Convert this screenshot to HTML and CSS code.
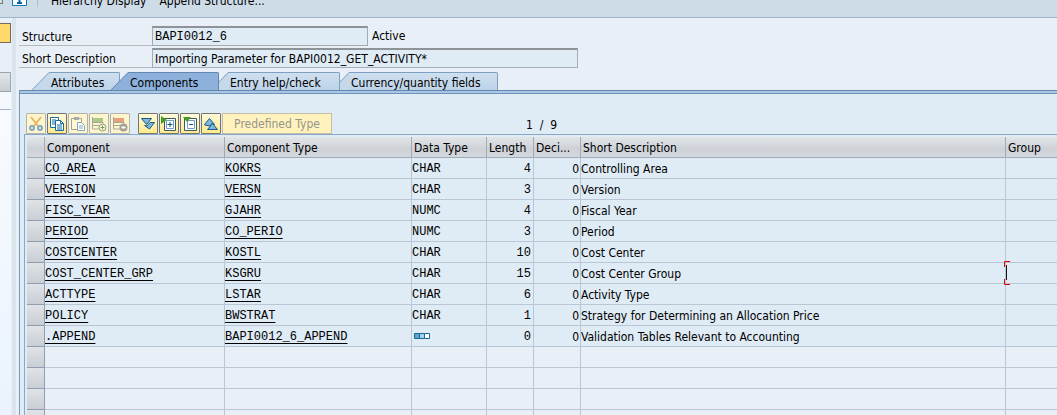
FILE: index.html
```html
<!DOCTYPE html>
<html lang="en">
<head>
<meta charset="utf-8">
<title>Structure BAPI0012_6</title>
<link rel="stylesheet" href="styles.css">
</head>
<body>
<header class="menubar">
  <span class="menu-stub"></span>
  <svg class="info" viewBox="0 0 15 6" width="15" height="6"><path d="M.5 0v5.500h14V0" fill="#fff" stroke="#0878b8"/><path d="M7.500 0v3M5 3h5" stroke="#07679e" stroke-width="2"/></svg>
  <span class="divider"></span>
  <button class="menu-item">Hierarchy Display</button>
  <button class="menu-item">Append Structure...</button>
</header>
<div class="workspace">
  <aside class="side">
    <div class="side-top"><button class="side-button" aria-label="Object list"></button></div>
    <div class="side-head"></div>
    <div class="side-line"></div>
    <div class="side-body"></div>
  </aside>
  <main class="main">
    <form class="form">
      <div class="field-row">
        <label class="label" for="structure">Structure</label>
        <input class="field mono" id="structure" value="BAPI0012_6" readonly>
        <span>Active</span>
      </div>
      <div class="field-row">
        <label class="label" for="description">Short Description</label>
        <input class="field wide" id="description" value="Importing Parameter for BAPI0012_GET_ACTIVITY*" readonly>
      </div>
    </form>
    <nav class="tabs">
      <button class="tab"><svg class="slant" viewBox="0 0 18 18"><path d="M0 18 17 .5h1V18z" fill="#c5d9eb"/><path d="M0 18 17 .5h1" fill="none" stroke="#7d9fc2"/></svg><span class="tab-text attributes">Attributes</span></button>
      <button class="tab active"><svg class="slant" viewBox="0 0 18 18"><path d="M0 18 17 .5h1V18z" fill="#8db1da"/><path d="M0 18 17 .5h1" fill="none" stroke="#6288b0"/></svg><span class="tab-text components">Components</span></button>
      <button class="tab"><svg class="slant short" viewBox="0 0 10 18"><path d="M0 18V10L9 .5h1V18z" fill="#c5d9eb"/><path d="M0 10 9 .5h1" fill="none" stroke="#7d9fc2"/></svg><span class="tab-text entry">Entry help/check</span></button>
      <button class="tab"><svg class="slant short" viewBox="0 0 10 18"><path d="M0 18V10L9 .5h1V18z" fill="#c5d9eb"/><path d="M0 10 9 .5h1" fill="none" stroke="#7d9fc2"/></svg><span class="tab-text currency">Currency/quantity fields</span></button>
    </nav>
    <section class="panel">
      <div class="toolbar">
        <button class="tool off" aria-label="Cut"><svg viewBox="0 0 16 16"><path d="M3 1l7 9M13 1L6 10" stroke="#e5b765" stroke-width="2"/><g fill="none" stroke="#7fa9c4" stroke-width="2"><circle cx="4" cy="12" r="2"/><circle cx="12" cy="12" r="2"/></g></svg></button>
        <button class="tool" aria-label="Copy"><svg viewBox="0 0 16 16"><path d="M1.500 1.500h8v10h-8z" fill="#fff" stroke="#176b9c"/><path d="M3 4h4M3 6h4M3 8h4" stroke="#176b9c"/><path d="M6.500 4.500h5l3 3v7h-8z" fill="#fff" stroke="#176b9c"/><path d="M11.500 4.500v3h3M8 9h5M8 11h5M8 13h5" fill="none" stroke="#176b9c"/></svg></button>
        <button class="tool off" aria-label="Paste"><svg viewBox="0 0 16 16"><path d="M1.500 2.500h10v11h-10z" fill="#fff8d9" stroke="#a4a294"/><path d="M4 1h5v3H4z" fill="#aaa"/><path d="M7.500 6.500h4l3 3v5h-7z" fill="#fff" stroke="#80a9bd"/><path d="M9 10h4M9 12h4" stroke="#80a9bd"/></svg></button>
        <button class="tool off" aria-label="Insert row"><svg viewBox="0 0 16 16"><path d="M1 2h11v4H1z" fill="#a9c889"/><path d="M1.500 1v12H8M1 6.500h11V9M1 9.500h7" fill="none" stroke="#aaa799"/><circle cx="11.500" cy="11.500" r="3.500" fill="#fff8d9" stroke="#82a371"/><path d="M9.500 11.500h4M11.500 9.500v4" stroke="#709861"/></svg></button>
        <button class="tool off" aria-label="Delete row"><svg viewBox="0 0 16 16"><path d="M1 2h11v4H1z" fill="#e3a17d"/><path d="M1.500 1v12H8M1 6.500h11V9M1 9.500h7" fill="none" stroke="#aaa799"/><circle cx="11.500" cy="11.500" r="4" fill="#a3a097"/><path d="M9.500 11.500h4" stroke="#fff" stroke-width="2"/></svg></button>
        <span class="tool-gap"></span>
        <button class="tool" aria-label="Last"><svg viewBox="0 0 16 16"><path d="M1.500 2.500h10l-5 6zM4.500 9.500l2.500.5 3-3.500h4.500l-5 6.500z" fill="#80b7df" stroke="#175c89"/></svg></button>
        <button class="tool" aria-label="Expand"><svg viewBox="0 0 16 16"><path d="M3.500 2.500h11v12h-11z" fill="#fff" stroke="#3c5668"/><path d="M5.500 4.500h7v8h-7z" fill="#fff" stroke="#6f9fbe"/><path d="M6.500 8.500h5M9 6v5" stroke="#07558a"/><path d="M0 0l6 4-6 4z" fill="#459b24"/></svg></button>
        <button class="tool" aria-label="Collapse"><svg viewBox="0 0 16 16"><path d="M2.500 2.500h12v12h-12z" fill="#fff" stroke="#3c5668"/><path d="M5.500 4.500h7v8h-7z" fill="#fff" stroke="#6f9fbe"/><path d="M7 8.500h4" stroke="#07558a"/><path d="M1 1h8L5 6z" fill="#459b24"/></svg></button>
        <button class="tool" aria-label="First"><svg viewBox="0 0 16 16"><path d="M4.500 13.500h10l-5-6zM1.500 8.500l5-6 5 6-2-1.500-2.500 3-5.500-1z" fill="#80b7df" stroke="#175c89"/></svg></button>
        <button class="predefined" disabled>Predefined Type</button>
        <span class="counter">1&nbsp; /&nbsp; 9</span>
      </div>
      <div class="grid-wrap">
      <table class="grid">
        <colgroup><col class="c-sel"><col class="c-name"><col class="c-type"><col class="c-data"><col class="c-num"><col class="c-num"><col class="c-desc"><col></colgroup>
        <thead><tr><th></th><th>Component</th><th>Component Type</th><th>Data Type</th><th>Length</th><th>Deci...</th><th>Short Description</th><th>Group</th></tr></thead>
        <tbody>
          <tr><td></td><td><a href="#">CO_AREA</a></td><td><a href="#">KOKRS</a></td><td>CHAR</td><td>4</td><td>0</td><td>Controlling Area</td><td></td></tr>
          <tr><td></td><td><a href="#">VERSION</a></td><td><a href="#">VERSN</a></td><td>CHAR</td><td>3</td><td>0</td><td>Version</td><td></td></tr>
          <tr><td></td><td><a href="#">FISC_YEAR</a></td><td><a href="#">GJAHR</a></td><td>NUMC</td><td>4</td><td>0</td><td>Fiscal Year</td><td></td></tr>
          <tr><td></td><td><a href="#">PERIOD</a></td><td><a href="#">CO_PERIO</a></td><td>NUMC</td><td>3</td><td>0</td><td>Period</td><td></td></tr>
          <tr><td></td><td><a href="#">COSTCENTER</a></td><td><a href="#">KOSTL</a></td><td>CHAR</td><td>10</td><td>0</td><td>Cost Center</td><td></td></tr>
          <tr><td></td><td><a href="#">COST_CENTER_GRP</a></td><td><a href="#">KSGRU</a></td><td>CHAR</td><td>15</td><td>0</td><td>Cost Center Group</td><td class="focus"><svg class="cursor" viewBox="0 0 6 24"><path d="M6 .5H.5V6M.5 18v5.500H6" fill="none" stroke="#e00000"/><path d="M2.500 4v15" stroke="#111"/></svg></td></tr>
          <tr><td></td><td><a href="#">ACTTYPE</a></td><td><a href="#">LSTAR</a></td><td>CHAR</td><td>6</td><td>0</td><td>Activity Type</td><td></td></tr>
          <tr><td></td><td><a href="#">POLICY</a></td><td><a href="#">BWSTRAT</a></td><td>CHAR</td><td>1</td><td>0</td><td>Strategy for Determining an Allocation Price</td><td></td></tr>
          <tr><td></td><td><a href="#">.APPEND</a></td><td><a href="#">BAPI0012_6_APPEND</a></td><td><svg class="append" viewBox="0 0 16 6"><g stroke="#166a98"><path d="M.5.500h5v5h-5z" fill="#5ba6cf"/><path d="M5.500.500h5v5h-5z" fill="#a9d0e8"/><path d="M10.500.500h5v5h-5z" fill="#fff"/></g></svg></td><td>0</td><td>0</td><td>Validation Tables Relevant to Accounting</td><td></td></tr>
          <tr class="empty"><td></td><td></td><td></td><td></td><td></td><td></td><td></td><td></td></tr>
          <tr class="empty"><td></td><td></td><td></td><td></td><td></td><td></td><td></td><td></td></tr>
          <tr class="empty"><td></td><td></td><td></td><td></td><td></td><td></td><td></td><td></td></tr>
          <tr class="empty"><td></td><td></td><td></td><td></td><td></td><td></td><td></td><td></td></tr>
        </tbody>
      </table>
      </div>
    </section>
  </main>
</div>
</body>
</html>
```

FILE: styles.css
```css
* { box-sizing: border-box; }
body {
  margin: 0;
  height: 100vh;
  overflow: hidden;
  display: flex;
  flex-direction: column;
  background: #e8eff6;
  color: #000;
  font: 12px/16px "DejaVu Sans Condensed", "Noto Sans", sans-serif;
}
button, input { font: inherit; color: inherit; margin: 0; padding: 0; border: 0; background: none; }
.menubar {
  display: flex;
  flex: none;
  height: 18px;
  overflow: hidden;
  background: #cedce8;
  border-bottom: 1px solid #9fb4c8;
}
.menu-stub { width: 3px; height: 4px; border: 1px solid #777; border-width: 0 1px 1px 0; margin-right: 9px; }
.divider { width: 1px; height: 7px; margin: 0 13px 0 10px; background: #a9bfd4; }
.menu-item { height: 16px; margin-top: -7px; margin-right: 13px; }
.workspace { display: flex; flex: 1; min-height: 0; }
.side { width: 16px; flex: none; display: flex; flex-direction: column; border-right: 4px solid #d9e4ed; }
.side-top { height: 54px; padding-top: 5px; }
.side-button { display: block; width: 11px; height: 20px; background: #ffd76b; border: 1px solid #756c5b; border-left: 0; }
.side-head { height: 20px; width: 11px; background: linear-gradient(#e3e5e8, #c9ced5); border: 1px solid #9aa5b1; border-left: 0; }
.side-line { height: 18px; width: 11px; background: #f5f9fe; border-bottom: 1px solid #9fb4c8; }
.side-body { flex: 1; width: 11px; background: linear-gradient(#f8fbff, #eaf3fd); }
.main { flex: 1; min-width: 0; padding-left: 3px; display: flex; flex-direction: column; }
.form { display: grid; gap: 2px; padding-top: 8px; }
.field-row { display: flex; align-items: center; height: 20px; }
.label { width: 133px; height: 20px; padding: 3px 0 0 3px; border-bottom: 1px solid #b5b9bc; }
.field { width: 216px; height: 20px; margin-right: 4px; padding: 0 2px; background: #dfebf5; border: 1px solid #a7abae; border-top: 2px solid #8e9397; }
.field.wide { width: 426px; }
.mono { font-family: "Liberation Mono", monospace; }
.tabs { display: flex; padding: 4px 0 0 13px; }
.tab { display: flex; height: 18px; }
.slant { width: 18px; height: 18px; flex: none; }
.slant.short { width: 10px; }
.tab-text { height: 18px; padding-top: 2px; text-align: left; background: linear-gradient(#cfe0ef, #bdd3e8); border-top: 1px solid #7d9fc2; border-right: 1px solid #7d9fc2; border-radius: 0 2px 0 0; white-space: nowrap; }
.active { margin-left: -9px; z-index: 1; }
.active .tab-text { background: #8db1da; border-color: #6288b0; }
.attributes { width: 70px; padding-left: 1px; }
.components { width: 90px; padding-left: 1px; }
.entry { width: 111px; padding-left: 1px; }
.currency { width: 148px; padding-left: 1px; }
.panel { flex: 1; min-height: 0; border-left: 1px solid #7899bb; border-top: 1px solid #6288b0; background: #dfebf5; box-shadow: inset 0 2px #a9c6e3, inset 0 3px #6e94bb; }
.toolbar { display: flex; height: 43px; padding: 22px 0 0 6px; }
.tool { width: 20px; height: 21px; margin-right: 1px; padding: 1px; border: 1px solid #77746b; border-radius: 1px; background: linear-gradient(#fffbdc, #ffe98c); }
.tool svg { display: block; width: 16px; height: 16px; }
.off { border-color: #b5b2a7; background: #fff5cc; }
.tool-gap { width: 7px; }
.predefined { width: 110px; height: 21px; border: 1px solid #c5bea5; background: #fff2bd; color: #96968d; }
.counter { margin-left: 194px; padding-top: 4px; }
.grid-wrap { margin-left: 4px; padding: 2px 0 0 2px; border-top: 1px solid #88a8ca; border-left: 1px solid #88a8ca; }
.grid { width: 100%; table-layout: fixed; border-spacing: 0; }
.c-sel { width: 18px; }
.c-name { width: 180px; }
.c-type { width: 187px; }
.c-data { width: 75px; }
.c-num { width: 47px; }
.c-desc { width: 425px; }
th, td { height: 21px; padding: 1px 0 0; border-right: 1px solid #bac6d4; border-bottom: 1px solid #bac6d4; white-space: nowrap; }
th { padding-left: 2px; text-align: left; font-weight: normal; background: linear-gradient(#e3e5e7, #cdd1d7 60%, #d6dadf); border-color: #9daab8; }
th:last-child, td:last-child { border-right: 0; }
td:nth-child(-n+5) { font-family: "Liberation Mono", monospace; }
td:nth-child(5) { text-align: right; padding-right: 2px; }
td:nth-child(6) { text-align: right; padding-right: 1px; }
td:first-child { background: linear-gradient(#e0e3e6, #c9ced6); border-color: #929eaf; }
.empty td:not(:first-child) { background: #e8eff6; }
a { color: inherit; text-underline-offset: 3px; }
.append { display: block; width: 16px; height: 6px; margin: 0 0 2px 2px; }
.focus { position: relative; }
.cursor { position: absolute; left: -2px; top: -2px; width: 6px; height: 24px; }
```
